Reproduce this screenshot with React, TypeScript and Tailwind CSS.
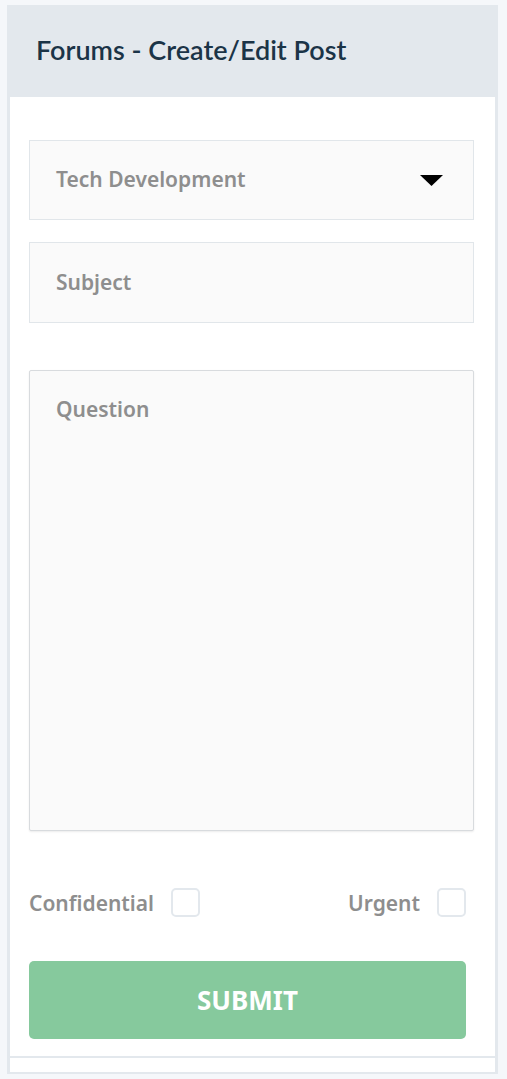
import { useState } from 'react'

const fieldFont = { fontFamily: '"Noto Sans", "Open Sans", sans-serif' }

function Checkbox({ checked, onChange }: { checked: boolean; onChange: () => void }) {
  return (
    <button
      type="button"
      onClick={onChange}
      className="h-[29px] w-[29px] shrink-0 rounded-[5px] border-2 border-[#e3e8ed] bg-white"
      aria-pressed={checked}
    />
  )
}

export default function App() {
  const [confidential, setConfidential] = useState(false)
  const [urgent, setUrgent] = useState(false)

  return (
    <div className="min-h-screen bg-[#f5f7fa] pl-[7px] pr-[9px] pt-[5px]">
      <div className="bg-[#e3e8ed] px-[3px] pb-[2px]">
        <div className="flex h-[90px] items-center pl-[26px]">
          <h1
            className="text-[27px] font-semibold text-[#1b3447]"
            style={{ fontFamily: 'Lato, "Liberation Sans", sans-serif' }}
          >
            Forums - Create/Edit Post
          </h1>
        </div>

        <div className="mt-[2px] bg-white pb-[17px] pl-[19px] pr-[21px] pt-[43px]" style={fieldFont}>
          <div className="flex h-[80px] items-center justify-between border border-[#e1e6ea] bg-[#fafafa] pl-[26px] pr-[30px]">
            <span className="text-[21px] font-semibold text-[#8e8e8e]">Tech Development</span>
            <svg width="23" height="11" viewBox="0 0 23 11">
              <path d="M0 0 H23 L11.5 11 Z" fill="#000" />
            </svg>
          </div>

          <div className="mt-[22px] flex h-[81px] items-center border border-[#e1e6ea] bg-[#fafafa] pl-[26px]">
            <span className="text-[21px] font-semibold text-[#8e8e8e]">Subject</span>
          </div>

          <div className="mt-[47px] h-[461px] rounded-[2px] border border-[#d8dbde] bg-[#fafafa] pl-[26px] pt-[23px] shadow-[0_1px_2px_rgba(0,0,0,0.08)]">
            <span className="text-[21px] font-semibold text-[#8e8e8e]">Question</span>
          </div>

          <div className="mt-[57px] flex h-[29px] items-center justify-between pr-[8px]">
            <label className="flex items-center gap-[17px]">
              <span className="text-[21px] leading-[28px] font-semibold text-[#8e8e8e]">Confidential</span>
              <Checkbox checked={confidential} onChange={() => setConfidential(!confidential)} />
            </label>
            <label className="flex items-center gap-[17px]">
              <span className="text-[21px] leading-[28px] font-semibold text-[#8e8e8e]">Urgent</span>
              <Checkbox checked={urgent} onChange={() => setUrgent(!urgent)} />
            </label>
          </div>

          <button
            type="button"
            className="mt-[44px] flex h-[78px] w-[437px] items-center justify-center rounded-[5px] bg-[#86c99d] text-[26px] font-bold text-white"
          >
            SUBMIT
          </button>
        </div>

        <div className="mt-[2px] h-[14px] bg-white" />
      </div>
    </div>
  )
}
